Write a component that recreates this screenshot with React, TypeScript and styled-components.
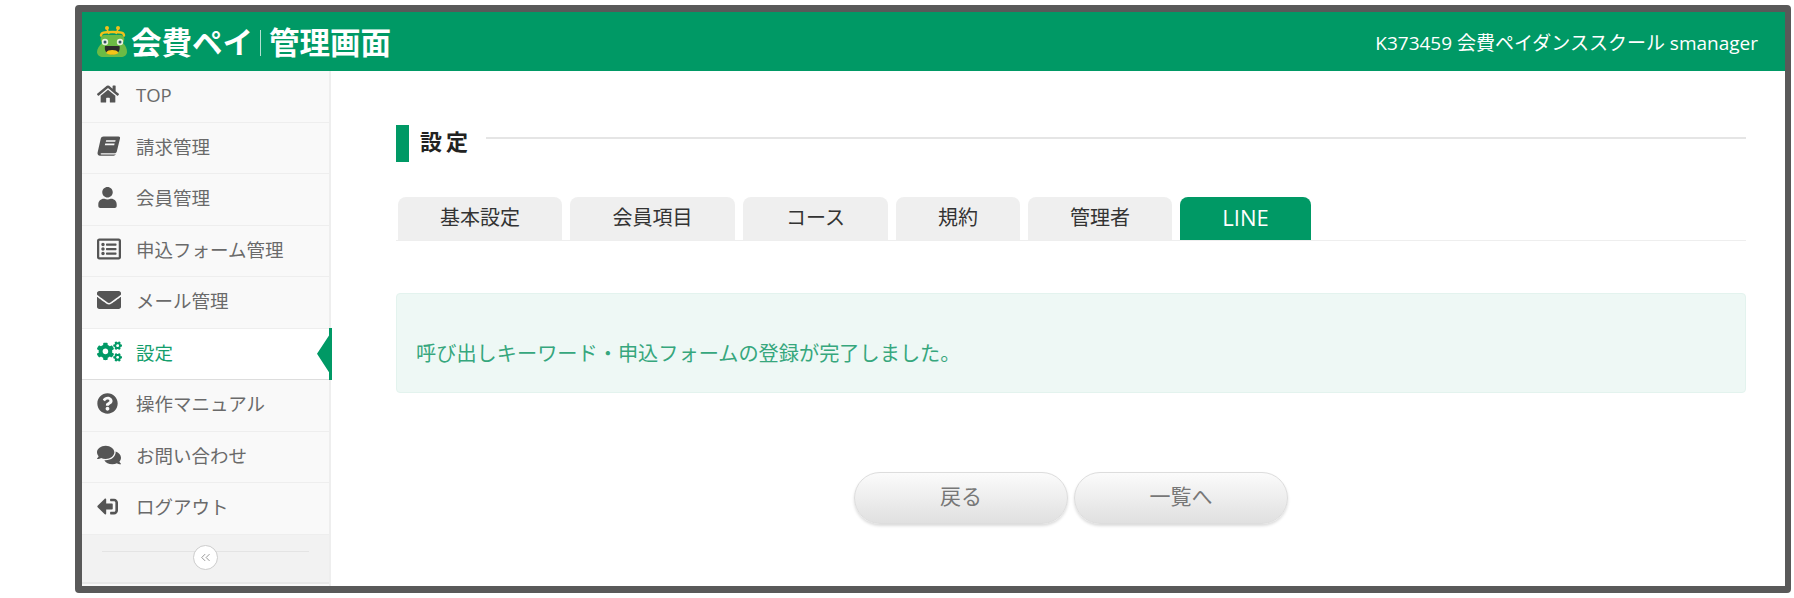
import React from "react";
import styled, { createGlobalStyle } from "styled-components";
import {
  FaHome,
  FaUser,
  FaRegListAlt,
  FaEnvelope,
  FaCogs,
  FaQuestionCircle,
  FaComments,
  FaSignOutAlt,
} from "react-icons/fa";
import { ChevronsLeft } from "lucide-react";

const FONT = `"Open Sans", "Noto Sans CJK JP", sans-serif`;
const GREEN = "#009965";

const GlobalStyle = createGlobalStyle`
  html, body {
    margin: 0;
    padding: 0;
    background: #fff;
    font-family: ${FONT};
  }
`;

const FlippedSignOut = styled(FaSignOutAlt)`
  transform: scaleX(-1);
`;

const BookIcon = () => (
  <svg width="24" height="20" viewBox="0 0 24 20" fill="currentColor">
    <path d="M6.5 0.5H21.5C22.8 0.5 23.3 1.4 23 2.6L19.8 15.4C19.5 16.6 18.6 17.2 17.6 17.2H4.6C3.4 17.2 3 18.4 4.4 18.4H17.6L18.6 18.1C18.4 19.2 17.6 19.8 16.6 19.8H3C1.2 19.8 0.2 18.4 0.6 16.6L3.8 2.6C4.1 1.3 5.1 0.5 6.5 0.5ZM9.2 4.2L8.8 5.8H18.2L18.6 4.2ZM8.2 7.6L7.8 9.2H17.2L17.6 7.6Z" />
  </svg>
);

const FrogLogo = () => (
  <svg width="30" height="31" viewBox="0 0 30 31">
    <circle cx="10" cy="2" r="2" fill="#f2c21a" />
    <circle cx="21" cy="2" r="2" fill="#f2c21a" />
    <path d="M10 3L12 8M21 3L19 8" fill="none" stroke="#f2c21a" strokeWidth="1.6" />
    <path d="M5 17C3 14 3 10 7 9H24C28 10 28 14 26 17C29 20 30 23 30 26C30 29 27 31 24 31H6C3 31 0 29 0 26C0 23 2 20 5 17Z" fill="#6cbb45" />
    <path d="M4 9.5C4 6.5 7 6 15.5 6S27 6.5 27 9.5" fill="none" stroke="#f2c21a" strokeWidth="2.4" strokeLinecap="round" />
    <circle cx="8" cy="16" r="3.2" fill="#e8f4e0" />
    <circle cx="23" cy="16" r="3.2" fill="#e8f4e0" />
    <circle cx="8" cy="16" r="1.5" fill="#35506a" />
    <circle cx="23" cy="16" r="1.5" fill="#35506a" />
    <path d="M8 20H22.5C23.5 25 20.5 28.5 15.2 28.5S7 25 8 20Z" fill="#2b2b2b" />
    <path d="M9 27C10 24.6 12.4 24 15.2 24S20.5 24.6 21.5 27C20 28.2 18 28.8 15.2 28.8S10.5 28.2 9 27Z" fill="#f5c518" />
  </svg>
);

const NAV_ITEMS = [
  { label: "TOP", icon: <FaHome size={22} /> },
  { label: "請求管理", icon: <BookIcon /> },
  { label: "会員管理", icon: <FaUser size={21} /> },
  { label: "申込フォーム管理", icon: <FaRegListAlt size={24} /> },
  { label: "メール管理", icon: <FaEnvelope size={24} /> },
  { label: "設定", icon: <FaCogs size={25} />, active: true },
  { label: "操作マニュアル", icon: <FaQuestionCircle size={21} /> },
  { label: "お問い合わせ", icon: <FaComments size={24} /> },
  { label: "ログアウト", icon: <FlippedSignOut size={21} /> },
];

const TABS = [
  { label: "基本設定", width: 164 },
  { label: "会員項目", width: 165 },
  { label: "コース", width: 145 },
  { label: "規約", width: 124 },
  { label: "管理者", width: 144 },
  { label: "LINE", width: 131, active: true },
];

export default function App() {
  return (
    <>
      <GlobalStyle />
      <Page>
        <Frame>
          <Header>
            <Logo>
              <FrogLogo />
              <LogoText>会費ペイ</LogoText>
              <LogoDivider />
              <LogoText>管理画面</LogoText>
            </Logo>
            <Account>K373459 会費ペイダンススクール smanager</Account>
          </Header>
          <Body>
            <Sidebar>
              {NAV_ITEMS.map((item) => (
                <NavRow key={item.label} $active={item.active}>
                  <NavIcon $active={item.active}>{item.icon}</NavIcon>
                  <span>{item.label}</span>
                  {item.active && <ActiveArrow />}
                </NavRow>
              ))}
              <SidebarFooter>
                <CollapseButton>
                  <ChevronsLeft size={15} strokeWidth={1.4} />
                </CollapseButton>
              </SidebarFooter>
            </Sidebar>
            <Main>
              <TitleRow>
                <TitleBar />
                <Title>設定</Title>
                <TitleRule />
              </TitleRow>
              <TabList>
                {TABS.map((tab) => (
                  <Tab key={tab.label} $active={tab.active} $width={tab.width}>
                    {tab.label}
                  </Tab>
                ))}
              </TabList>
              <Notice>呼び出しキーワード・申込フォームの登録が完了しました。</Notice>
              <Buttons>
                <PillButton>戻る</PillButton>
                <PillButton>一覧へ</PillButton>
              </Buttons>
            </Main>
          </Body>
        </Frame>
      </Page>
    </>
  );
}

const Page = styled.div`
  width: 1794px;
  height: 598px;
  box-sizing: border-box;
  padding: 5px 3px 5px 75px;
  overflow: hidden;
`;

const Frame = styled.div`
  height: 100%;
  box-sizing: border-box;
  border: solid #595959;
  border-width: 7px 6px 7px 7px;
  border-radius: 4px;
  display: flex;
  flex-direction: column;
  background: #fff;
`;

const Header = styled.header`
  height: 59px;
  flex: none;
  background: ${GREEN};
  display: flex;
  align-items: center;
  justify-content: space-between;
  padding: 0 27px 0 15px;
  color: #fff;
`;

const Logo = styled.div`
  display: flex;
  align-items: center;
`;

const LogoText = styled.span`
  font-size: 30.5px;
  font-weight: 700;
  line-height: 1;
  margin-left: 4px;
  margin-top: 2px;
`;

const LogoDivider = styled.span`
  width: 1px;
  height: 26px;
  margin: 2px 4px 0 7px;
  background: rgba(255, 255, 255, 0.7);
`;

const Account = styled.div`
  font-size: 19px;
`;

const Body = styled.div`
  flex: 1;
  display: flex;
  min-height: 0;
`;

const Sidebar = styled.nav`
  width: 249px;
  flex: none;
  box-sizing: border-box;
  background: #f9f9f9;
  border-right: 2px solid #eee;
  display: flex;
  flex-direction: column;
`;

const NavRow = styled.div<{ $active?: boolean }>`
  position: relative;
  height: 51.5px;
  flex: none;
  box-sizing: border-box;
  display: flex;
  align-items: center;
  padding-bottom: 4px;
  font-size: 18.5px;
  color: ${(props) => (props.$active ? "#149e6d" : "#6a6a6a")};
  background: ${(props) => (props.$active ? "#fff" : "transparent")};
  border-bottom: 1px solid ${(props) => (props.$active ? "#ddd" : "#eee")};
`;

const NavIcon = styled.span<{ $active?: boolean }>`
  width: 54px;
  padding-left: 15px;
  box-sizing: border-box;
  flex: none;
  display: flex;
  color: ${(props) => (props.$active ? GREEN : "#555")};
`;

const ActiveArrow = styled.span`
  position: absolute;
  top: -1px;
  right: -3px;
  bottom: -1px;
  width: 15px;
  background: ${GREEN};
  clip-path: polygon(100% 0, 100% 100%, 80% 100%, 80% 85%, 0 50%, 80% 15%, 80% 0);
`;

const SidebarFooter = styled.div`
  flex: 1;
  border-bottom: 2px solid #e8e8e8;
  margin-bottom: 2px;
  display: flex;
  justify-content: center;
  padding: 10px 20px 0;
  background-color: #f2f2f2;
  background-image: linear-gradient(#e4e4e4, #e4e4e4);
  background-size: calc(100% - 40px) 1px;
  background-position: center 16px;
  background-repeat: no-repeat;
`;

const CollapseButton = styled.button`
  width: 25px;
  height: 25px;
  padding: 0;
  border: 1px solid #ccc;
  border-radius: 50%;
  background: #fff;
  color: #888;
  display: flex;
  align-items: center;
  justify-content: center;
`;

const Main = styled.main`
  flex: 1;
  min-width: 0;
  padding: 54px 39px 0 65px;
`;

const TitleRow = styled.div`
  display: flex;
  align-items: flex-start;
  height: 37px;
`;

const TitleBar = styled.span`
  width: 13px;
  height: 37px;
  background: ${GREEN};
`;

const Title = styled.h1`
  margin: -2px 14px 0 11px;
  font-size: 22px;
  font-weight: 700;
  line-height: 37px;
  letter-spacing: 4px;
  color: #222;
`;

const TitleRule = styled.span`
  flex: 1;
  height: 2px;
  margin-top: 12px;
  background: #e5e5e5;
`;

const TabList = styled.div`
  display: flex;
  gap: 8px;
  margin-top: 35px;
  padding-left: 2px;
  border-bottom: 1px solid #eee;
`;

const Tab = styled.div<{ $active?: boolean; $width: number }>`
  width: ${(props) => props.$width}px;
  height: 43px;
  flex: none;
  display: flex;
  align-items: center;
  justify-content: center;
  padding-bottom: 4px;
  box-sizing: border-box;
  border-radius: 8px 8px 0 0;
  font-size: ${(props) => (props.$active ? "22px" : "20px")};
  color: ${(props) => (props.$active ? "#fff" : "#333")};
  background: ${(props) => (props.$active ? GREEN : "#efefef")};
`;

const Notice = styled.div`
  margin-top: 52px;
  height: 100px;
  box-sizing: border-box;
  padding: 46px 19px 0;
  font-size: 20.2px;
  line-height: 26px;
  color: #36a77d;
  background: #eef8f5;
  border: 1px solid #e3f3ee;
  border-radius: 4px;
`;

const Buttons = styled.div`
  display: flex;
  justify-content: center;
  gap: 6px;
  margin-top: 79px;
`;

const PillButton = styled.button`
  width: 214px;
  height: 52px;
  padding: 0 0 6px;
  border: 1px solid #ddd;
  border-radius: 26px;
  background: linear-gradient(#fbfbfb, #e0e0e0);
  box-shadow: 0 2px 3px rgba(0, 0, 0, 0.14);
  font-family: ${FONT};
  font-size: 21px;
  color: #777;
`;
